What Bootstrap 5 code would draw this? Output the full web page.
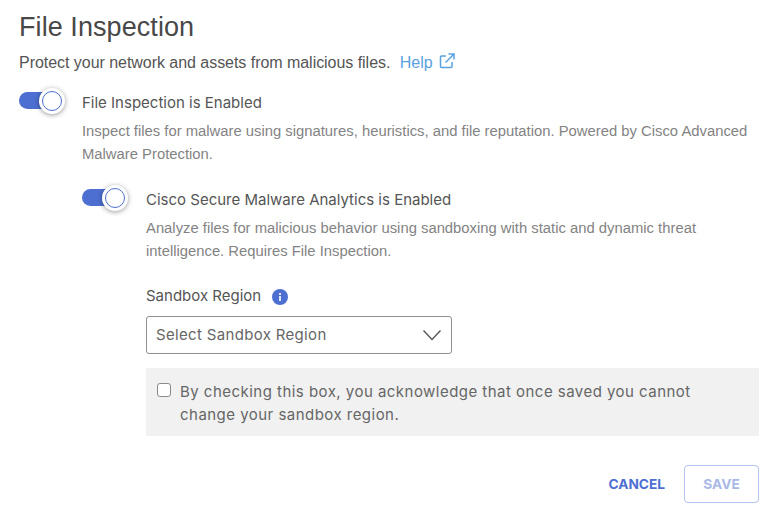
<!DOCTYPE html>
<html lang="en">
<head>
<meta charset="utf-8">
<title>File Inspection</title>
<link href="https://cdn.jsdelivr.net/npm/bootstrap@5.3.0/dist/css/bootstrap.min.css" rel="stylesheet">
<style>
html,body{height:515px;overflow:hidden;background:#fff}
body{font-family:"Inter","Liberation Sans",sans-serif;color:#4a4a4a;font-size:14px}
.page-wrap{padding:10px 19px 0 19px}
.page-title{font-family:"Liberation Sans",sans-serif;font-size:27px;line-height:34px;margin:0 0 7px;font-weight:400;color:#484848;letter-spacing:.07px}
.page-sub{font-family:"Liberation Sans",sans-serif;font-size:16px;line-height:24px;color:#555;margin:0 0 17px;letter-spacing:-.04px}
.help-link{color:#5aa2e0;text-decoration:none;margin-left:5px}
.help-link svg{vertical-align:-1px;margin-left:2px}
.toggle-track{width:40px;height:17px;background:#4e6fd2;border-radius:9px;position:relative;flex:none}
.toggle-knob{position:absolute;right:-6px;top:-4px;width:26px;height:26px;border-radius:50%;background:#fff;box-shadow:0 1px 5px rgba(0,0,0,.4)}
.toggle-knob::after{content:"";position:absolute;inset:3px;border-radius:50%;border:1px solid #4e6fd2}
.tog-row{gap:23px}
.tog-row.nested{gap:24px;margin-top:23px}
.tog-title{font-size:15px;line-height:20px;color:#555;margin-top:1px}
.tog-desc{font-family:"Liberation Sans",sans-serif;font-size:14.820px;line-height:23px;color:#838383;margin:7px 0 0}
.region-label{font-size:15px;line-height:20px;margin-top:23px;color:#555}
.info-dot{width:16px;height:16px;margin-left:11px;vertical-align:-4px}
.region-select{width:306px;height:38px;margin-top:10px;border:1px solid #8f8f94;border-radius:3px;padding:0 9px;font-size:15px;letter-spacing:.33px;color:#666}
.ack-box{margin-top:14px;background:#f1f1f1;padding:12px 60px 10px 11px;width:613px;gap:9px}
.ack-check{width:14px;height:14px;border:1.5px solid #8a8a8a;border-radius:3px;background:#fff;flex:none;margin-top:3px;appearance:none}
.ack-text{font-size:15px;line-height:23px;color:#666;letter-spacing:.47px}
.action-row{margin-top:29px;gap:19px}
.btn-cancel{font-weight:700;font-size:13.700px;color:#4e6fd2;padding:0;border:0;background:none}
.btn-save{font-weight:700;font-size:13.700px;color:#a9b8e6;width:75px;height:38px;padding:0;border:1.5px solid #b4c5f2;border-radius:4px;background:#fff}
</style>
</head>
<body>
<div class="page-wrap">
  <h1 class="page-title">File Inspection</h1>
  <p class="page-sub">Protect your network and assets from malicious files. <a class="help-link" href="#">Help <svg width="16" height="16" viewBox="0 0 16 16" fill="none" stroke="#5aa2e0" stroke-width="1.5"><path d="M13 9v4.500a1 1 0 0 1-1 1H2.500a1 1 0 0 1-1-1V4a1 1 0 0 1 1-1H7"/><path d="M6.500 9.500 14.500 1.500M9.500 1h5.500v5.500"/></svg></a></p>
  <div class="d-flex tog-row">
    <div class="toggle-track"><span class="toggle-knob"></span></div>
    <div class="flex-grow-1">
      <div class="tog-title">File Inspection is Enabled</div>
      <p class="tog-desc">Inspect files for malware using signatures, heuristics, and file reputation. Powered by Cisco Advanced Malware Protection.</p>
      <div class="d-flex tog-row nested">
        <div class="toggle-track"><span class="toggle-knob"></span></div>
        <div class="flex-grow-1">
          <div class="tog-title">Cisco Secure Malware Analytics is Enabled</div>
          <p class="tog-desc">Analyze files for malicious behavior using sandboxing with static and dynamic threat intelligence. Requires File Inspection.</p>
          <div class="region-label">Sandbox Region<svg class="info-dot" viewBox="0 0 16 16"><circle cx="8" cy="8" r="8" fill="#4e6fd2"/><rect x="7" y="7" width="2" height="5" fill="#dfe5f7"/><rect x="7" y="4" width="2" height="2" fill="#dfe5f7"/></svg></div>
          <div class="region-select d-flex align-items-center justify-content-between"><span>Select Sandbox Region</span><svg width="20" height="12" viewBox="0 0 20 12" fill="none" stroke="#555" stroke-width="1.400"><path d="M1.500 1.500 10 10.500 18.500 1.500"/></svg></div>
          <div class="ack-box d-flex"><input class="ack-check" type="checkbox" aria-label="Acknowledge"><span class="ack-text">By checking this box, you acknowledge that once saved you cannot change your sandbox region.</span></div>
        </div>
      </div>
    </div>
  </div>
  <div class="d-flex justify-content-end align-items-center action-row">
    <button class="btn-cancel" type="button">CANCEL</button>
    <button class="btn-save" type="button">SAVE</button>
  </div>
</div>
<script src="https://cdn.jsdelivr.net/npm/bootstrap@5.3.0/dist/js/bootstrap.bundle.min.js"></script>
</body>
</html>
